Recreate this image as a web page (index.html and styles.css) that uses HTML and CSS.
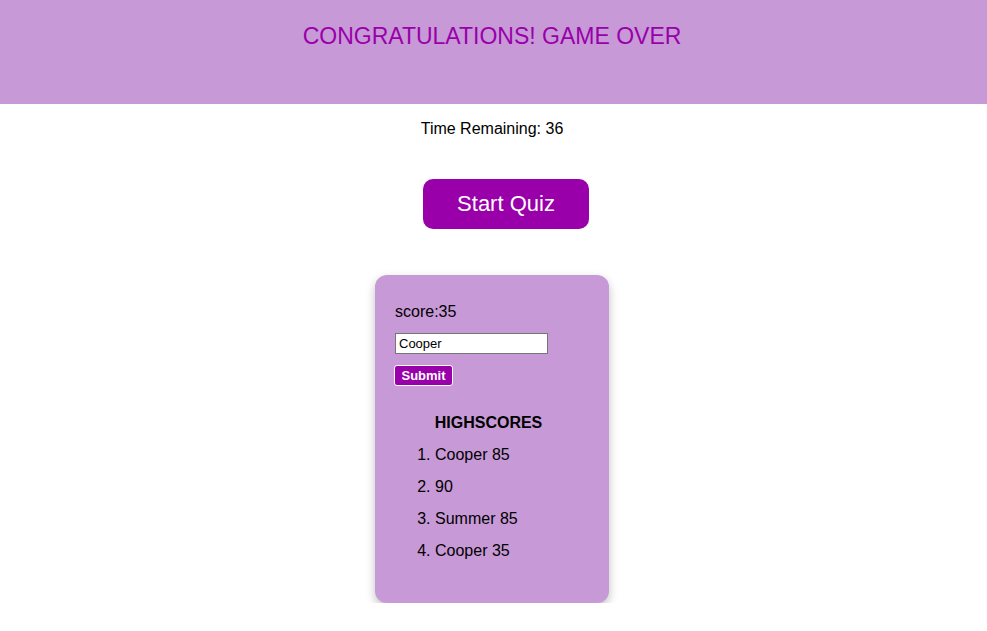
FILE: index.html
```html
<!DOCTYPE html>
<html lang="en">
<head>
<meta charset="utf-8">
<title>Quiz</title>
<link rel="stylesheet" href="styles.css">
</head>
<body>
<header class="banner">
  <h1 class="banner-title">CONGRATULATIONS! GAME OVER</h1>
</header>
<main class="main">
  <p class="timer">Time Remaining: 36</p>
  <button class="start-btn" type="button">Start Quiz</button>
  <section class="card">
    <p class="score">score:35</p>
    <form class="score-form">
      <input class="name-input" type="text" value="Cooper">
      <button class="submit-btn" type="button">Submit</button>
    </form>
    <h2 class="hs-title">HIGHSCORES</h2>
    <ol class="hs-list">
      <li>Cooper 85</li>
      <li>90</li>
      <li>Summer 85</li>
      <li>Cooper 35</li>
    </ol>
  </section>
</main>
</body>
</html>
```
FILE: styles.css
```css
* { box-sizing: border-box; }
body {
  margin: 0;
  font-family: "Liberation Sans", Arial, Helvetica, sans-serif;
  color: #000;
  background: #fff;
}
.banner {
  background: #c799d6;
  height: 104px;
  padding: 23px 3px 0 0;
  text-align: center;
}
.banner-title {
  margin: 0;
  font-size: 23px;
  font-weight: normal;
  line-height: 26px;
  color: #9900aa;
}
.main {
  display: flex;
  flex-direction: column;
  align-items: center;
  padding-right: 3px;
}
.timer {
  margin: 16px 0 0;
  font-size: 16px;
  line-height: 18px;
}
.start-btn {
  margin-top: 41px;
  margin-left: 28px;
  width: 166px;
  height: 50px;
  border: none;
  border-radius: 10px;
  background: #9900aa;
  color: #fff;
  font-family: inherit;
  font-size: 22px;
}
.card {
  margin-top: 46px;
  width: 234px;
  height: 328px;
  background: #c799d6;
  border-radius: 12px;
  box-shadow: 0 4px 10px rgba(0,0,0,0.25);
  padding: 28px 20px 20px;
}
.score {
  margin: 0;
  font-size: 16px;
  line-height: 18px;
}
.score-form {
  display: flex;
  flex-direction: column;
  align-items: flex-start;
  gap: 11px;
  margin-top: 12px;
}
.name-input {
  width: 153px;
  height: 21px;
  border: 1px solid #767676;
  padding: 1px 3px;
  font-family: inherit;
  font-size: 13px;
  background: #fff;
}
.submit-btn {
  margin-left: -1px;
  width: 59px;
  height: 21px;
  padding: 0;
  border: 1px solid #fff;
  border-radius: 3px;
  background: #9900aa;
  color: #fff;
  font-family: inherit;
  font-size: 13px;
  font-weight: bold;
}
.hs-title {
  margin: 28px 0 0;
  padding-right: 7px;
  font-size: 16px;
  line-height: 18px;
  text-align: center;
}
.hs-list {
  margin: 14px 0 0;
  padding-left: 40px;
  font-size: 16px;
  line-height: 18px;
}
.hs-list li { margin-bottom: 14px; }
```
